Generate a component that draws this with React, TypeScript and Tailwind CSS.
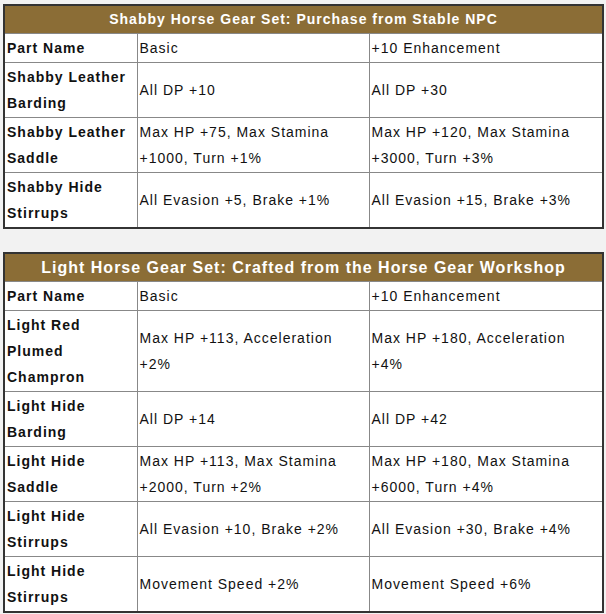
const shabby = [
  { name: ["Shabby Leather", "Barding"], basic: "All DP +10", plus: "All DP +30" },
  {
    name: ["Shabby Leather", "Saddle"],
    basic: "Max HP +75, Max Stamina +1000, Turn +1%",
    plus: "Max HP +120, Max Stamina +3000, Turn +3%",
  },
  {
    name: ["Shabby Hide", "Stirrups"],
    basic: "All Evasion +5, Brake +1%",
    plus: "All Evasion +15, Brake +3%",
  },
];

const light = [
  {
    name: ["Light Red", "Plumed", "Champron"],
    basic: "Max HP +113, Acceleration +2%",
    plus: "Max HP +180, Acceleration +4%",
  },
  { name: ["Light Hide", "Barding"], basic: "All DP +14", plus: "All DP +42" },
  {
    name: ["Light Hide", "Saddle"],
    basic: "Max HP +113, Max Stamina +2000, Turn +2%",
    plus: "Max HP +180, Max Stamina +6000, Turn +4%",
  },
  {
    name: ["Light Hide", "Stirrups"],
    basic: "All Evasion +10, Brake +2%",
    plus: "All Evasion +30, Brake +4%",
  },
  {
    name: ["Light Hide", "Stirrups"],
    basic: "Movement Speed +2%",
    plus: "Movement Speed +6%",
  },
];

type Row = { name: string[]; basic: string; plus: string };

function GearTable({ title, big, rows }: { title: string; big?: boolean; rows: Row[] }) {
  const cell = "border border-[#888] px-[2px] py-[1px] align-middle";
  return (
    <table className="w-[601px] border-collapse border-2 border-[#333] bg-white table-fixed">
      <colgroup>
        <col className="w-[133px]" />
        <col className="w-[232px]" />
        <col />
      </colgroup>
      <tbody>
        <tr>
          <td
            colSpan={3}
            className={`border border-[#888] bg-[#8b6d36] text-center font-bold text-white leading-[25px] py-[1px] ${
              big ? "text-[16px]" : "text-[14px]"
            }`}
          >
            {title}
          </td>
        </tr>
        <tr>
          <td className={`${cell} font-bold`}>Part Name</td>
          <td className={cell}>Basic</td>
          <td className={cell}>+10 Enhancement</td>
        </tr>
        {rows.map((r, i) => (
          <tr key={i}>
            <td className={`${cell} font-bold`}>
              {r.name.map((n, j) => (
                <div key={j}>{n}</div>
              ))}
            </td>
            <td className={cell}>{r.basic}</td>
            <td className={cell}>{r.plus}</td>
          </tr>
        ))}
      </tbody>
    </table>
  );
}

export default function App() {
  return (
    <div className="min-h-screen bg-[#f2f2f2] pl-[3px] pt-[4px] text-[14px] leading-[26px] tracking-[1px] text-[#111] font-['Liberation_Sans',Arial,sans-serif]">
      <GearTable title="Shabby Horse Gear Set: Purchase from Stable NPC" rows={shabby} />
      <div className="h-[23px]" />
      <GearTable
        big
        title="Light Horse Gear Set: Crafted from the Horse Gear Workshop"
        rows={light}
      />
    </div>
  );
}
